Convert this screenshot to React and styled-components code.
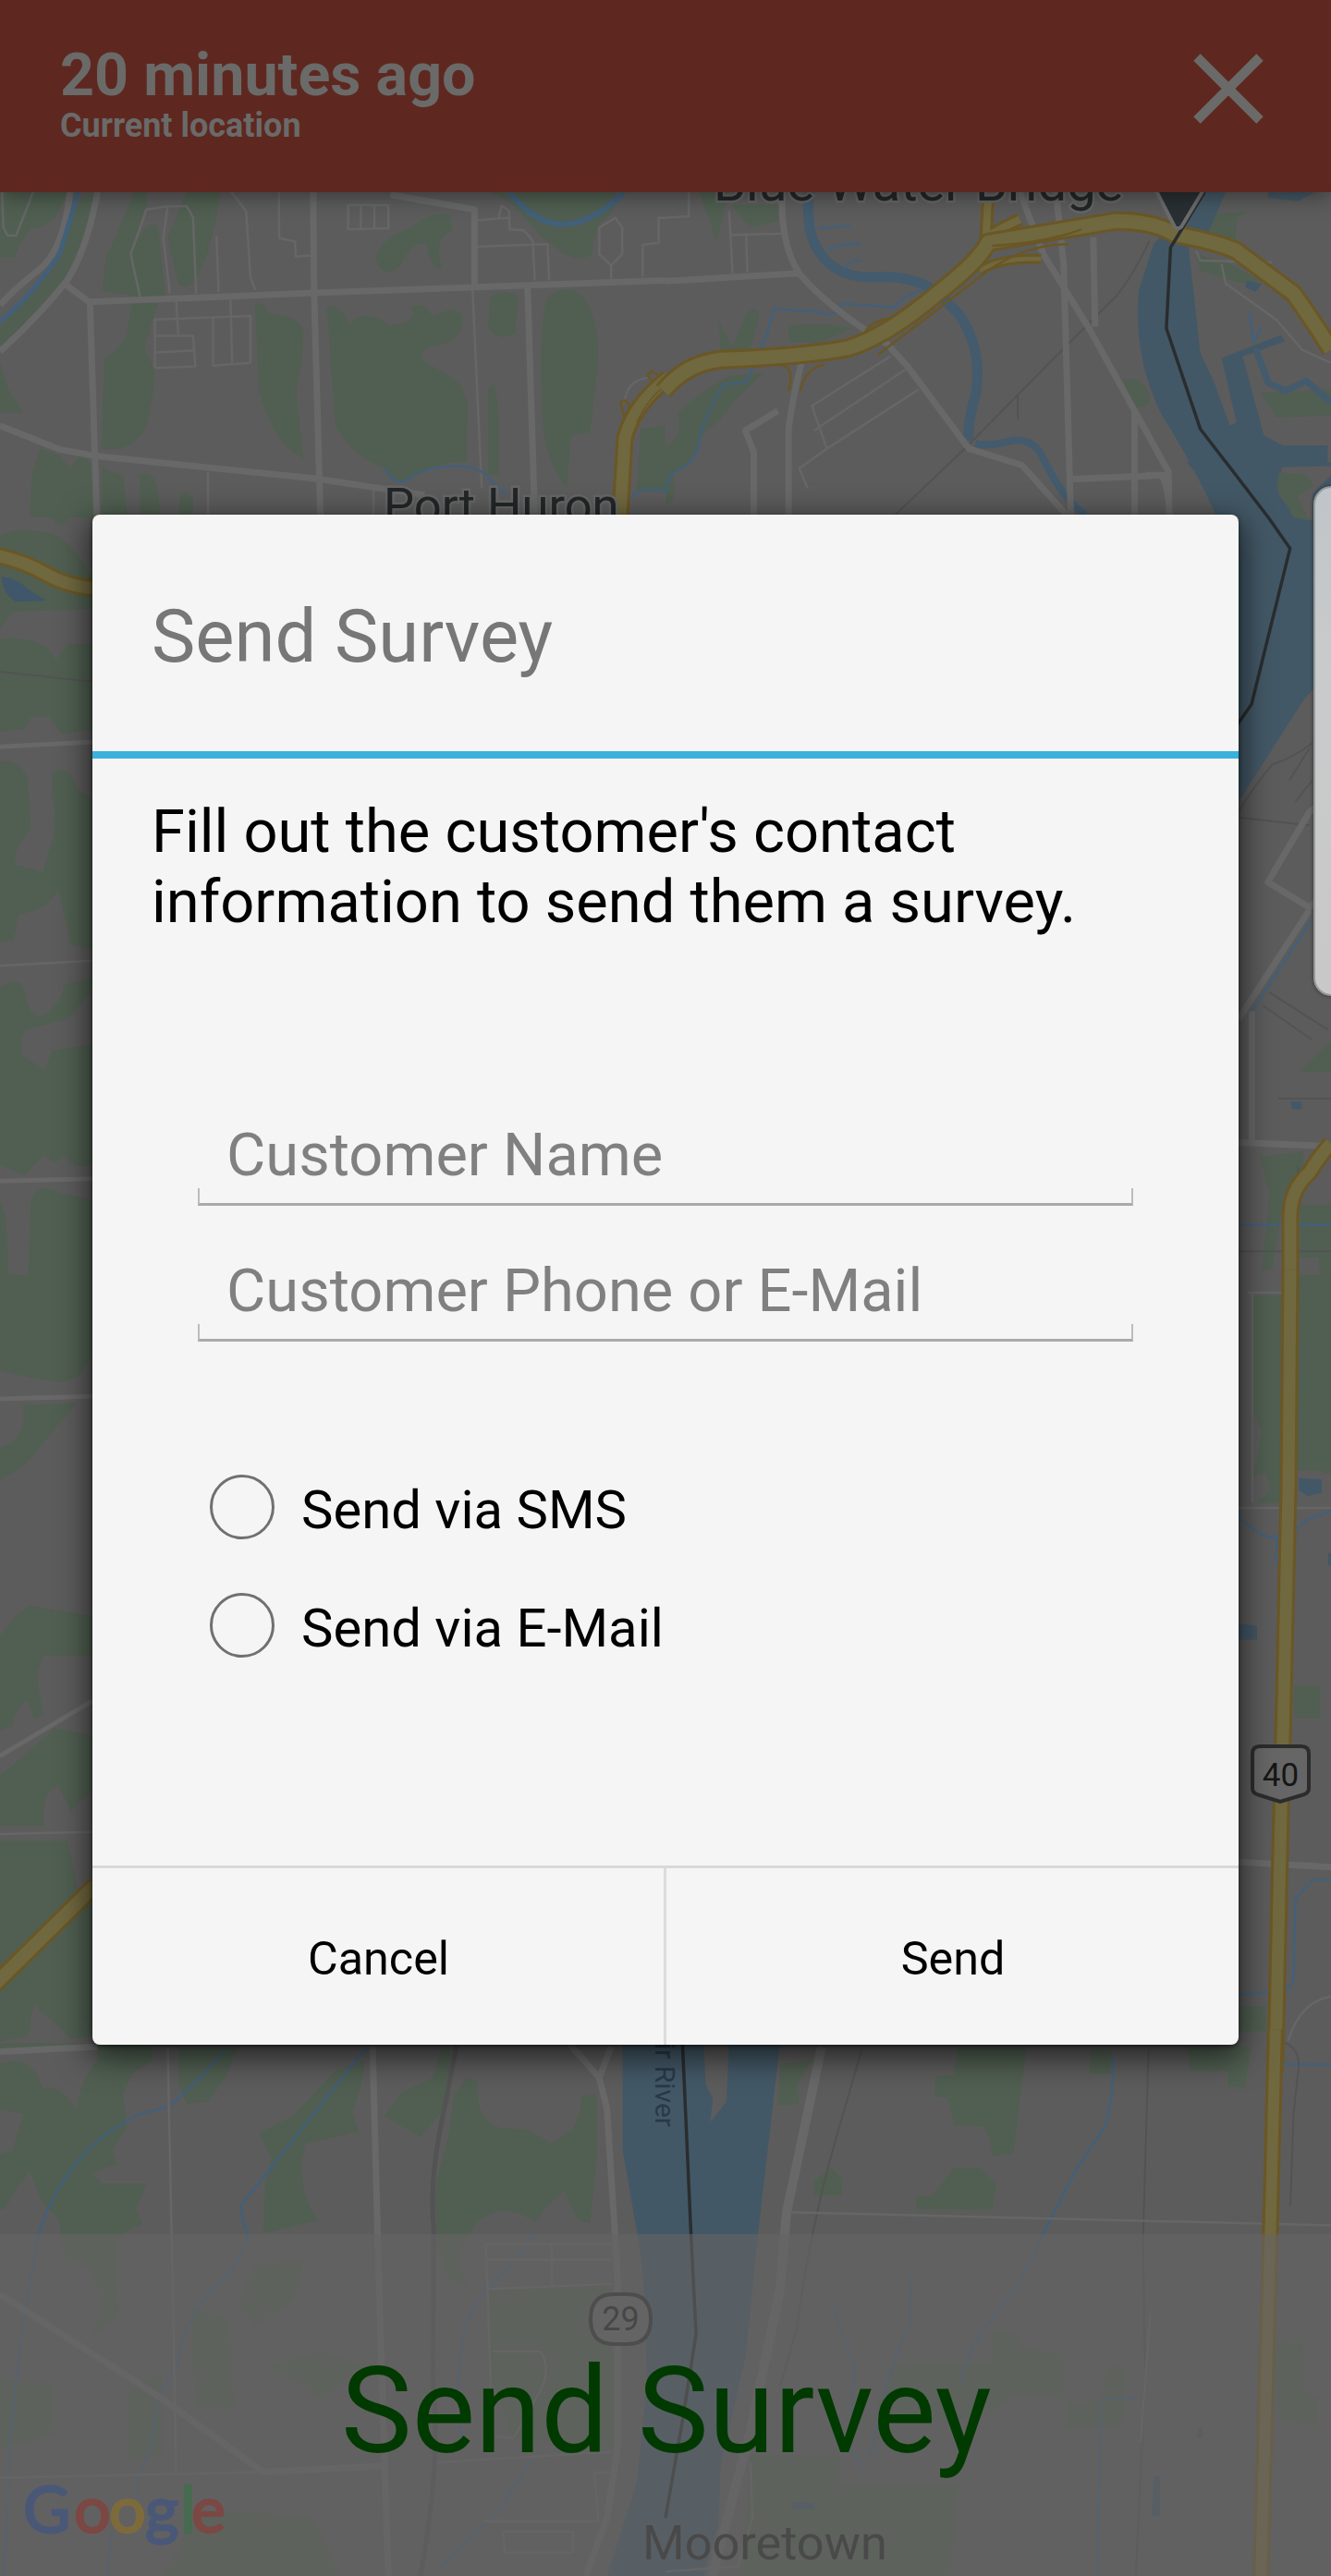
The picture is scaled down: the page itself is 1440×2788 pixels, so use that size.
import React, { useState } from "react";
import styled, { createGlobalStyle } from "styled-components";

const Global = createGlobalStyle`
  * { box-sizing: border-box; }
  body { margin: 0; background: #5d5c5c; font-family: Roboto, "Liberation Sans", sans-serif; }
`;

const Screen = styled.div`
  position: relative;
  display: flex;
  flex-direction: column;
  width: 1440px;
  height: 2788px;
  overflow: hidden;
`;

const MapCanvas = styled.svg`
  position: absolute;
  inset: 0;
  width: 1440px;
  height: 2788px;
`;

const areaColors = {
  green: "#505f51",
  water: "#435866",
  pond: "#3f566b",
  land: "#5d5c5c",
};

const Area = styled.path`
  fill: ${(p) => areaColors[p.$kind]};
`;

const lineStyles = {
  river: ["#435b6c", 11],
  creek: ["#42607a", 2.5],
  road: ["#686868", 7],
  lane: ["#666", 2.5],
  rail: ["#535353", 2],
  ramp: ["#6a5725", 2.5],
  highwayEdge: ["#6a5725", 22],
  highway: ["#70683f", 16],
  border: ["#292d2f", 3.5],
};

const Line = styled.path`
  fill: none;
  stroke: ${(p) => lineStyles[p.$kind][0]};
  stroke-width: ${(p) => p.$w || lineStyles[p.$kind][1]};
  stroke-linejoin: round;
  vector-effect: non-scaling-stroke;
`;

const BridgePin = styled.path`
  fill: #292f33;
  stroke: #6b6b6b;
  stroke-width: 4;
  vector-effect: non-scaling-stroke;
`;

const MapLabel = styled.text`
  font-family: Roboto, sans-serif;
  font-size: ${(p) => p.$size}px;
  fill: ${(p) => p.$color || "#232627"};
  paint-order: stroke;
  stroke: ${(p) => (p.$halo ? "#666" : "none")};
  stroke-width: 5;
`;

const Shield = styled.path`
  fill: ${(p) => p.$fill};
  stroke: #2c2c2c;
  stroke-width: 4;
`;

const LogoLetter = styled.text`
  font-family: Lato, sans-serif;
  font-size: 70px;
  fill: ${(p) => p.$color};
  stroke: ${(p) => p.$color};
  stroke-width: 2.5;
`;

const Header = styled.header`
  position: relative;
  display: flex;
  justify-content: space-between;
  align-items: flex-start;
  flex: none;
  height: 208px;
  padding: 43px 72px 0 65px;
  background: #5e2820;
  color: #6a6a69;
  font-weight: 700;
  box-shadow: 0 4px 22px rgba(0, 0, 0, 0.4);
`;

const Age = styled.div`
  font-size: 64.6px;
  line-height: 76px;
`;

const Place = styled.div`
  font-size: 36px;
  line-height: 36px;
  margin-top: -1px;
`;

const CloseButton = styled.button`
  display: flex;
  margin-top: 14px;
  padding: 0;
  border: 0;
  background: none;
  color: inherit;
`;

const Dialog = styled.section`
  position: relative;
  display: flex;
  flex-direction: column;
  flex: none;
  height: 1656px;
  margin: 349px 100px 0;
  border-radius: 8px;
  background: #f5f5f5;
  color: #000;
  box-shadow: 0 10px 34px 4px rgba(0, 0, 0, 0.6), 0 2px 5px rgba(0, 0, 0, 0.5);
`;

const DialogTitle = styled.h2`
  display: flex;
  align-items: center;
  height: 264px;
  margin: 0;
  padding: 7px 64px 0;
  border-bottom: 8px solid #3cb0dc;
  color: #777;
  font-size: 79.6px;
  font-weight: 400;
`;

const DialogBody = styled.div`
  flex: 1;
  padding: 41px 64px 0;
`;

const Message = styled.p`
  margin: 0;
  font-size: 65px;
  line-height: 76px;
`;

const Fields = styled.div`
  margin: 144px 50px 0;
`;

const Field = styled.label`
  position: relative;
  display: flex;
  align-items: flex-end;
  height: 147px;
  &::after {
    content: "";
    position: absolute;
    left: 0;
    right: 0;
    bottom: 0;
    height: 16px;
    border: 2px solid #bcbcbc;
    border-bottom: 3px solid #aaa;
    border-top: 0;
  }
`;

const Input = styled.input`
  width: 100%;
  height: 108px;
  padding: 0 31px 3px;
  border: 0;
  outline: 0;
  background: transparent;
  font: 65px Roboto, sans-serif;
  &::placeholder { color: #808080; opacity: 1; }
`;

const Options = styled.div`
  margin: 115px 63px 0;
`;

const Option = styled.label`
  display: flex;
  align-items: center;
  gap: 29px;
  height: 128px;
  font-size: 58px;
`;

const Radio = styled.input`
  appearance: none;
  width: 70px;
  height: 70px;
  margin: 0;
  border: 3px solid #707070;
  border-radius: 50%;
  &:checked { background: radial-gradient(#3cb0dc 45%, transparent 48%); }
`;

const OptionText = styled.span`
  padding-top: 5px;
`;

const Actions = styled.footer`
  display: grid;
  grid-template-columns: 618px 1fr;
  height: 194px;
  border-top: 3px solid #d9d9d9;
`;

const Action = styled.button`
  padding: 4px 0 0 1px;
  border: 0;
  background: none;
  color: #000;
  font: 50.3px Roboto, sans-serif;
  & + & { border-left: 3px solid #dcdcdc; }
`;

const SurveyBar = styled.button`
  display: flex;
  align-items: center;
  justify-content: center;
  position: relative;
  flex: none;
  height: 370px;
  margin-top: 205px;
  padding: 13px 0 0 2px;
  border: 0;
  background: transparent;
  color: #003a00;
  font: 129px Roboto, sans-serif;
`;

const EdgeHandle = styled.div`
  position: absolute;
  right: -20px;
  top: 526px;
  width: 39px;
  height: 552px;
  border: 2px solid #96999b;
  border-radius: 20px;
  background: linear-gradient(#bfc5c9, #c9cacb 35%, #c8c8c8);
  box-shadow: 0 0 4px rgba(0, 0, 0, 0.5);
`;

const Areas = ({ kind, items }) => items.map((d) => <Area key={d} $kind={kind} d={d} />);
const Lines = ({ kind, items }) => items.map((d) => <Line key={d} $kind={kind} d={d} />);

const Highway = ({ d, w = 16 }) => (
  <>
    <Line $kind="highwayEdge" $w={w + 6} d={d} />
    <Line $kind="highway" $w={w} d={d} />
  </>
);

const NorthWest = () => (
  <g transform="scale(.4592 .3571)">
    <Areas kind="green" items={[
      "M0 582H160L130 660Q90 700 75 690L45 740L35 780L0 780Z",
      "M190 600L240 582L190 740L150 850L0 1060V990L130 800Z",
      "M240 880L250 780Q300 640 315 582H345V630L308 770L330 900Z",
      "M335 700Q380 650 375 730L390 895L330 900L308 770Z",
      "M395 720Q420 640 440 582H520Q510 680 485 780Q450 900 420 860Z",
      "M300 1000L310 920L375 910Q350 1000 340 1060Q365 1110 365 1150Q350 1300 330 1320Q300 1370 240 1360L245 1090Q300 1040 300 1000Z",
      "M600 920Q620 910 635 950Q700 955 715 1000L712 1090Q690 1200 705 1260L715 1390Q640 1340 610 1180Q605 1000 600 920Z",
      "M770 930Q800 920 825 985Q850 930 920 985Q985 980 970 930Q1000 910 1020 960Q1090 910 1090 980Q1080 1040 1020 1050Q970 1070 1010 1105Q1080 1150 1090 1180Q1110 1230 1100 1290V1400Q1040 1390 960 1460Q920 1470 905 1420Q830 1380 790 1290Q780 1100 770 930Z",
      "M885 780Q900 720 970 690Q1010 640 1060 650L1065 700Q1020 720 1040 810Q1020 830 1005 740Q970 730 940 810Q900 850 885 780Z",
      "M1155 900Q1190 870 1220 900L1215 1010Q1170 1040 1150 990Z",
      "M1150 1180L1165 1160L1175 1250V1440H1150Z",
      "M1290 900Q1340 850 1380 910Q1420 1000 1405 1150L1390 1310L1345 1320L1335 1480Q1290 1400 1280 1300Q1265 1000 1290 900Z",
      "M1150 582H1450Q1460 620 1430 660Q1400 680 1395 770Q1360 800 1320 760Q1270 720 1230 650Q1200 600 1150 582Z",
      "M0 1100L20 1180L55 1250H0Z",
      "M95 1360L140 1380L165 1420L190 1380Q220 1400 225 1440L230 1568H70L75 1440Z",
      "M240 1420L290 1440L300 1568H240Z",
      "M330 1440Q360 1420 370 1480L380 1568H330Z",
      "M425 1500Q440 1480 455 1510V1568H420Z",
      "M1510 1300L1568 1290V1490H1500Z",
    ]} />
    <Lines kind="lane" items={[
      "M5 582L8 690L18 714H38L78 582", "M330 900L308 770L345 635L395 625H440L455 660L462 890", "M395 625L385 720L400 890",
      "M510 715L515 885", "M545 582L580 640L590 840L602 880", "M657 582L658 722L695 732L697 778L735 774",
      "M820 622H915V692L820 695Z M850 622V692 M882 622V692", "M1118 668L1200 660V695L1235 698L1255 730L1260 850",
      "M1118 748L1290 740L1294 850", "M1175 660L1182 622L1200 640V660", "M1440 845V805L1412 770V690L1450 660L1466 690V770L1440 805",
      "M1514 840V742L1552 736V660H1568", "M415 910L420 1015", "M543 905L547 1100", "M365 1115V968L590 958V1100L502 1108V960",
      "M365 1018H455L460 1110L365 1115 M365 1068L458 1062", "M490 1430V1568", "M880 1480V1568", "M1113 870L1135 1480",
      "M1470 1220Q1480 1150 1525 1145",
    ]} />
    <Lines kind="road" items={[
      "M165 582Q150 760 90 820Q30 880 0 925", "M230 582Q200 780 152 860Q90 960 0 1065",
      "M152 860L210 915L740 888L1568 850", "M212 915L228 1568", "M738 582L740 888L755 1568",
      "M0 1290L140 1362L225 1382L740 1450L1000 1500", "M920 590L1118 635V870", "M1243 872L1260 1568",
    ]} />
    <Lines kind="creek" items={["M907 1420Q930 1475 960 1455Q980 1420 1070 1412Q1140 1415 1155 1455L1195 1500", "M1485 1510Q1510 1470 1568 1490"]} />
    <Line $kind="creek" $w={5} d="M185 582L140 770Q80 890 0 975" />
    <Line $kind="creek" $w={6} d="M1200 582Q1260 680 1330 680Q1400 675 1470 582" />
    <Line $kind="ramp" d="M1472 1270L1462 1220L1470 1212L1482 1225V1250M1540 1165L1526 1135L1535 1125L1555 1140" />
    <Highway w={13} d="M1461 1568L1472 1330Q1490 1230 1575 1145" />
    <Line $kind="ramp" $w={1.5} d="M1500 1280Q1530 1200 1568 1170" />
  </g>
);

const NorthEast = () => (
  <g transform="translate(720 0) scale(.4592 .3571)">
    <Areas kind="green" items={[
      "M80 582H150L120 730Z", "M155 620H265V670L200 690Z", "M125 970Q150 1040 160 1050L190 950Q220 920 220 960L200 1060H130Z",
      "M290 990Q350 970 440 995L360 1040L290 1035Z", "M150 1140L230 1130L160 1220Q130 1280 90 1310Q70 1400 20 1430V1520L0 1530V1350Q40 1340 30 1250Q90 1180 150 1140Z",
      "M1080 1150Q1140 1140 1140 1220Q1110 1260 1080 1190Z", "M1270 650L1380 640L1345 660V740L1260 700Z",
      "M1250 770L1330 800L1400 850L1360 860L1260 820Z", "M1400 1190L1568 1180V1260L1440 1265Z", "M1450 1420L1510 1430L1500 1568H1470L1440 1480Z",
    ]} />
    <Areas kind="water" items={[
      "M1265 582H1320L1280 700L1230 720L1260 1070L1290 1150L1330 1290L1345 1280L1310 1085L1380 1050L1450 1015L1460 1035L1360 1080L1410 1320L1455 1350H1560V1410L1450 1415V1480L1500 1568H1300Q1240 1400 1170 1260Q1100 1080 1115 880L1150 740Z",
      "M1420 582H1530L1490 610L1420 600Z", "M1370 850L1405 860L1390 885L1365 870Z",
      "M1568 1470L1490 1530V1568H1568Z",
    ]} />
    <Line $kind="river" d="M338 582Q330 700 360 760Q400 840 480 840Q580 830 640 885L690 950Q750 1060 730 1200Q715 1260 712 1335" />
    <Line $kind="river" $w={8} d="M730 1345Q760 1355 820 1335Q870 1330 890 1390Q940 1520 990 1560" />
    <Line $kind="river" $w={7} d="M1390 1055L1420 1160L1460 1185L1510 1155L1568 1220" />
    <Lines kind="creek" items={[
      "M360 692L435 684", "M380 760Q400 740 460 738", "M420 815Q430 790 460 790", "M610 880Q560 890 540 932L420 920L390 955L360 945L255 937L240 1010L190 1160L140 1165Q120 1190 82 1310Q80 1380 50 1410L10 1440L0 1490",
      "M1375 945L1385 1040L1405 990",
    ]} />
    <Lines kind="rail" items={["M535 1568L705 1360L920 1080L1060 900Q1100 840 1140 730", "M830 1200V1270"]} />
    <Lines kind="lane" items={[
      "M0 660L55 655V582", "M150 640L158 830", "M155 712L280 708", "M190 712L193 825", "M530 1080L345 1230L380 1360L597 1180", "M350 1305L565 1120", "M380 1360L315 1420L335 1480",
      "M1250 760L1260 790L1430 795", "M1310 800L1320 860L1440 970L1500 1060L1568 1100",
    ]} />
    <Lines kind="road" items={[
      "M0 852L315 828", "M275 582Q270 740 315 828Q380 930 520 1040L570 1110L715 1360L840 1410L950 1568", "M320 1100Q300 1200 290 1300L290 1568", "M208 1568V1370L188 1305L265 1245",
      "M835 582L890 770L1000 1000L1185 1430L1187 1568", "M920 582L938 800L955 1568", "M1008 720L1012 990", "M960 1452L1180 1440", "M1105 1250V1568",
    ]} />
    <Highway w={8} d="M760 600L755 720Q790 690 835 665" />
    <Highway w={5} d="M740 820Q790 780 885 785" />
    <Lines kind="ramp" items={["M275 1108Q305 1115 290 1185", "M375 1105Q330 1115 318 1185"]} />
    <Highway w={15} d="M-5 1185Q50 1100 130 1090Q330 1080 430 1055Q520 1020 640 890Q740 790 760 735Q900 705 1060 670Q1150 670 1200 710Q1290 730 1345 760L1480 890Q1530 980 1568 1060" />
    <Line $kind="ramp" d="M770 745Q900 735 980 695M500 1075Q620 960 760 820Q850 740 950 740M470 1005Q490 970 530 965" />
    <Line $kind="border" d="M1270 582L1190 750L1180 995L1260 1300L1420 1568" />
    <BridgePin d="M1155 575L1200 688Q1207 696 1215 688L1268 575Z" />
  </g>
);

const EastShore = () => (
  <g transform="translate(1240 500) scale(.3333 .5741)">
    <Area $kind="water" d="M130 0H600V390L510 450L300 640V100H240Q210 50 130 0Z" />
    <Area $kind="land" d="M440 10L600 8V25L540 60V110L480 100L430 60Z" />
    <Areas kind="green" items={["M430 20L520 25L545 45L490 65L530 110L480 105L425 50Z", "M500 1150L600 1090V1150Z", "M370 1310L510 1300V1350L450 1380L410 1520L375 1525L400 1380Z", "M500 1400H600V1568H570L560 1500H500Z"]} />
    <Lines kind="rail" items={["M300 660Q350 610 410 570Q470 560 540 530", "M300 670L530 685", "M465 600L530 540M485 640L540 600", "M400 1000L590 1070", "M380 1025L540 1090", "M430 1200H600", "M300 1488H600"]} />
    <Lines kind="road" items={["M600 630L530 660L395 792L530 840L600 800", "M0 25H50Q75 50 75 100", "M530 845L300 1050", "M343 1035V1280", "M300 1283L590 1290"]} />
    <Lines kind="creek" items={["M535 865L345 1035", "M300 1438H600"]} />
    <Area $kind="water" d="M468 1206H505V1220H475Z M490 1325L510 1345L490 1340Z" />
    <Highway w={13} d="M600 1285Q560 1310 530 1340Q470 1370 468 1420V1568" />
    <Line $kind="border" d="M256 -2L396 104L467 163L342 457L290 500" />
  </g>
);

const WestShore = () => (
  <>
    <g transform="translate(0 540) scale(.3333 .5421)">
      <Areas kind="green" items={[
        "M100 0H300V40L230 35L200 55L120 20Z", "M0 75Q50 55 120 65Q220 60 300 160V220L40 225L0 260Z", "M0 280Q80 270 160 300L180 320L220 290H300V460L200 470L160 435H100L80 460L0 465Z",
        "M0 525Q60 515 90 560L100 660Q40 700 50 730L140 745L165 690Q190 650 170 590V545Q230 530 250 580L300 600V900L230 890L190 780Q160 820 60 830L45 880L0 885Z",
        "M0 975Q60 950 80 980Q90 1030 130 1035Q200 1010 210 970L300 955V980Q240 1030 210 1040L80 1060Q60 1090 70 1110L145 1140L170 1100L300 1090V1330Q240 1340 210 1310L180 1325L140 1310L80 1350L0 1330Z",
        "M90 1568L100 1400Q130 1360 190 1385L300 1400V1568Z", "M0 1400L20 1440L30 1568H0Z",
      ]} />
      <Area $kind="pond" d="M5 155Q60 160 90 180L150 203L50 205Q10 190 5 155Z" />
      <Line $kind="rail" d="M0 345L300 365" />
      <Line $kind="road" $w={5} d="M0 495L300 485" />
      <Line $kind="lane" d="M0 932L300 922" />
      <Line $kind="road" $w={5} d="M0 1362L300 1357" />
      <Highway w={13} d="M-10 113Q80 125 150 150T310 178" />
    </g>
    <g transform="translate(0 1380) scale(.3333 .5421)">
      <Areas kind="green" items={[
        "M0 0H300V160L260 200L200 215L100 205L0 190Z", "M75 260L250 255L80 380L0 410V345Q90 330 75 260Z",
        "M0 720Q60 670 100 660L300 680V760H140L120 800L140 880L110 885L90 850Q50 860 40 900L0 910Z",
        "M0 1000L180 905L300 920V1030L230 1070L190 1020Q130 1030 145 1100H0Z", "M0 1130H220L250 1220L270 1250L300 1260V1520L230 1525L110 1455L90 1520L0 1530Z",
      ]} />
      <Line $kind="road" $w={5} d="M0 247L300 242" />
      <Line $kind="road" $w={5} d="M0 960L300 850" />
      <Line $kind="lane" d="M0 1116L300 1112" />
      <Line $kind="road" $w={5} d="M0 1550L300 1540" />
      <Highway w={14} d="M-20 1418L310 1218" />
    </g>
  </>
);

const EastRoad = () => (
  <g transform="translate(1320 1380) scale(.3333 .5421)">
    <Areas kind="green" items={["M110 40H205V455H120L165 430L150 395L110 400L135 310L110 280Z", "M245 0H360V400L320 390H245Z", "M240 820H325V885H240Z", "M60 1460H150V1510H60Z"]} />
    <Areas kind="water" items={["M255 405L330 408V435L285 442L255 430Z", "M60 696L120 700V728H60Z", "M350 555H360V580H350Z"]} />
    <Lines kind="creek" items={["M60 480Q110 515 165 525L240 510L280 490L360 470", "M185 525L180 565L192 580", "M360 1208H300L245 1245L238 1410L210 1430L60 1437"]} />
    <Lines kind="lane" items={["M60 465H360", "M90 35H205", "M105 35V455", "M360 1440Q260 1450 220 1530"]} />
    <Line $kind="road" d="M60 1172L360 1182" />
    <Highway w={13} d="M228 -10L222 430L205 900L195 1150L180 1568L178 1590" />
  </g>
);

const South = () => (
  <>
    <g transform="translate(0 2200) scale(.4592 .375)">
      <Areas kind="green" items={[
        "M0 30H360V80L310 120L290 180L300 270L265 340L275 380L215 405L240 435H345L320 510L335 550L280 585L270 640L280 820L220 870L240 780L210 680L150 640L140 540L100 490L70 400L40 450L10 510H0V350L30 340L55 235L0 220Z",
        "M420 40H560L530 130L490 200L440 205L420 150Z", "M790 110L860 80L850 160L830 230L845 285L720 320L710 380Q710 480 750 540L620 580L625 430L640 360L610 290L690 240Z",
        "M905 240L950 170L1020 130L1040 40H1060V200L990 300Z", "M1060 280L1070 180L1100 130L1125 140Q1120 260 1180 275L1245 280L1300 320L1350 280Q1370 230 1370 180L1405 180V380L1390 550L1360 540L1330 455L1290 500L1260 545Q1180 480 1120 550L1080 640L1100 740L1050 700L1030 600L1025 450Z",
        "M1150 740L1440 730V1200L1210 1170L1160 1000Z", "M600 670L715 660L690 770L600 850L560 780Z", "M450 790L540 830L550 1080L460 1085Z", "M300 1020L380 990V1220L300 1240Z", "M0 1000L120 1010L130 1160L0 1200Z", "M440 1400L560 1380L740 1400L800 1568H380L430 1480Z", "M640 960L760 920L850 960L760 1060Z",
      ]} />
      <Area $kind="land" d="M30 80Q80 80 100 160Q150 150 180 225Q190 130 230 80V45H0V90Z" />
      <Area $kind="water" d="M1467 30H1568V1568H1430L1500 1300L1525 1000L1515 700L1500 570L1467 340Z" />
      <Lines kind="creek" items={["M530 50L460 145L400 212L330 235Q250 280 195 355Q130 440 90 580Q50 850 25 1150L10 1568", "M865 40L570 495Q565 530 585 585Q560 680 500 740Q430 830 420 950L370 1060Q360 1230 320 1290L325 1340", "M1260 580L1190 690L1140 750L1095 850Q1080 950 1080 1040L1090 1200", "M1250 1235L1170 1390L1040 1540", "M250 1568L265 1440"]} />
      <Lines kind="lane" items={["M395 40L408 800L415 1275", "M1145 610H1440 M1145 655H1440 M1300 610V730 M1150 740L1440 725 M1145 610L1160 1160", "M0 1285L620 1268", "M1140 1410H1410L1400 1270H1440", "M1185 1440H1350V1500H1190Z", "M1160 920H1275Q1300 980 1270 1040L1210 1170L1165 1165", "M1030 1240L1440 1210"]} />
      <Lines kind="road" items={["M0 55L230 40", "M878 40L890 600L905 1200L915 1568", "M0 755L380 1055L620 1268L905 1250", "M1340 30L1412 130L1440 40", "M1412 130L1430 220L1455 700V1200L1430 1400L1380 1568"]} />
      <Line $kind="rail" $w={5} d="M1075 40L1045 230Q1010 430 1022 560L1020 1000Q1040 1250 990 1568" />
    </g>
    <g transform="translate(720 2200) scale(.4592 .375)">
      <Areas kind="green" items={[
        "M270 90L345 80L310 150L315 205L265 210Z", "M690 40H850L820 350L770 355Q765 300 750 270L680 265L665 190L635 185V130L680 120Z", "M680 390H740L780 440L770 510H590V475L630 470Z", "M350 430L390 390L415 420V470H350Z",
        "M1000 50H1050V120H1000Z", "M1230 40H1380L1365 160L1325 155V110H1235Z", "M770 860L835 870L840 910L935 925V1040L820 1050L750 1110L600 1120L500 1080L540 960L770 950Z", "M1040 960H1080V1130L940 1145L950 1070L1030 1060Z", "M1430 890L1500 900V1020L1535 1060V1130L1445 1120Z", "M200 1220H410V1300H690L670 1568H180Z",
      ]} />
      <Area $kind="water" d="M-2 30H270L218 580L190 930L130 1250L125 1420L90 1568H-2Z" />
      <Area $kind="land" d="M90 30H150L143 200L105 258L112 190L95 150Z" />
      <Line $kind="border" d="M40 30L60 580L72 870L40 1120L0 1400" />
      <Lines kind="creek" items={["M1055 70Q1055 220 1030 280L970 390L890 580Q850 700 800 780Q710 900 695 1010", "M580 705L575 850Q520 980 510 1090L480 1220", "M395 790L445 960L435 1200L470 1260", "M1112 1056H1025L1018 1568", "M1455 90L1568 92"]} />
      <Lines kind="rail" items={["M462 50L410 270Q340 560 310 850L270 1020", "M1138 50L1125 600L1130 1000L1108 1568", "M1460 30Q1500 50 1490 120L1480 230L1472 500"]} />
      <Area $kind="water" d="M1150 1280H1165V1395H1145Z M300 1355H350V1375H300Z M1255 1140H1265V1170H1252Z" />
      <Lines kind="lane" items={["M290 518L1568 556", "M200 1240L205 1400L170 1540L0 1555", "M1142 810L1120 1180"]} />
      <Line $kind="road" $w={10} d="M368 40L285 520L270 740L200 1150L110 1568" />
      <Highway w={12} d="M1437 -10L1425 580L1403 1568" />
    </g>
  </>
);

const googleLetters = [
  ["G", 25, "#4a5878"], ["o", 80, "#7b4844"], ["o", 118, "#7d6b3c"], ["g", 157, "#4a5878"], ["l", 195, "#466b50"], ["e", 207, "#7b4844"],
];

const Map = () => (
  <MapCanvas viewBox="0 0 1440 2788">
    <rect width="1440" height="2788" fill="#5d5c5c" />
    <NorthWest />
    <NorthEast />
    <EastShore />
    <WestShore />
    <EastRoad />
    <South />
    <MapLabel $halo $size={52.5} x="415" y="565">Port Huron</MapLabel>
    <MapLabel $halo $size={56} x="772" y="216.5">Blue Water Bridge</MapLabel>
    <MapLabel $size={30} $color="#29384a" transform="translate(709 2302) rotate(90)" textAnchor="end">St Clair River</MapLabel>
    <Shield $fill="#666" d="M1363 1890H1408Q1416 1890 1416 1898V1936Q1416 1941 1408 1943L1385 1950L1363 1943Q1355 1941 1355 1936V1898Q1355 1890 1363 1890Z" />
    <MapLabel $size={35} $color="#161616" x="1385.5" y="1933" textAnchor="middle">40</MapLabel>
    <MapLabel $size={52.3} $color="#222" x="695" y="2770">Mooretown</MapLabel>
    <Shield $fill="#646464" d="M664 2483H679Q704 2483 704 2510Q704 2537 679 2537H664Q639 2537 639 2510Q639 2483 664 2483Z" />
    <MapLabel $size={36} $color="#1a1a1a" x="671.5" y="2522" textAnchor="middle">29</MapLabel>
    <rect y="2418" width="1440" height="370" fill="#656464" fillOpacity="0.6" />
    {googleLetters.map(([letter, x, color]) => (
      <LogoLetter key={x} x={x} y="2741" $color={color}>{letter}</LogoLetter>
    ))}
  </MapCanvas>
);

export default function App() {
  const [method, setMethod] = useState("");
  return (
    <>
      <Global />
      <Screen>
        <Map />
        <Header>
          <div>
            <Age>20 minutes ago</Age>
            <Place>Current location</Place>
          </div>
          <CloseButton aria-label="Close">
            <svg width="78" height="78" viewBox="0 0 78 78" stroke="currentColor" strokeWidth="10.5">
              <path d="M5 5L73 73M73 5L5 73" />
            </svg>
          </CloseButton>
        </Header>
        <Dialog>
          <DialogTitle>Send Survey</DialogTitle>
          <DialogBody>
            <Message>Fill out the customer's contact information to send them a survey.</Message>
            <Fields>
              <Field><Input placeholder="Customer Name" /></Field>
              <Field><Input placeholder="Customer Phone or E-Mail" /></Field>
            </Fields>
            <Options>
              {["SMS", "E-Mail"].map((m) => (
                <Option key={m}>
                  <Radio type="radio" name="method" checked={method === m} onChange={() => setMethod(m)} />
                  <OptionText>Send via {m}</OptionText>
                </Option>
              ))}
            </Options>
          </DialogBody>
          <Actions>
            <Action>Cancel</Action>
            <Action>Send</Action>
          </Actions>
        </Dialog>
        <SurveyBar>Send Survey</SurveyBar>
        <EdgeHandle />
      </Screen>
    </>
  );
}
